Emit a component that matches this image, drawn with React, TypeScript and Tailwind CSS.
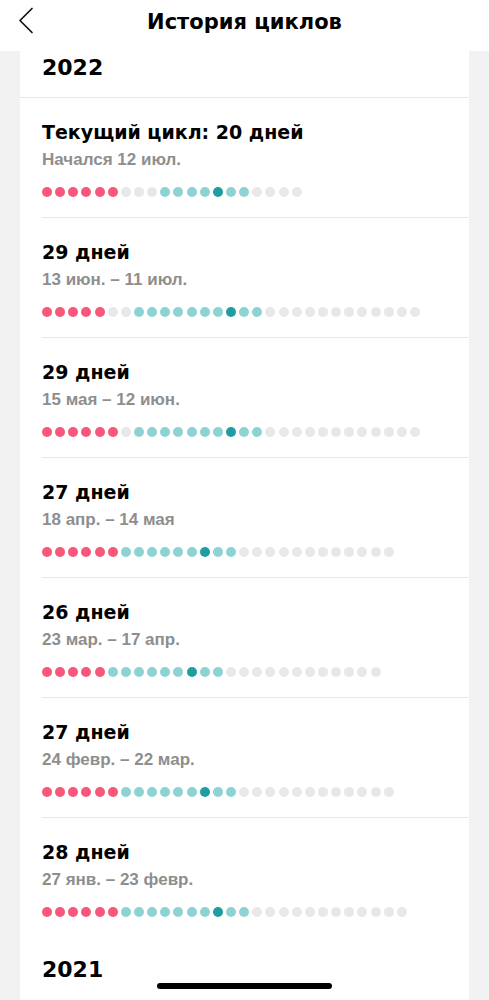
type Dot = "p" | "g" | "t" | "d";

const colors: Record<Dot, string> = {
  p: "bg-[#f8577b]",
  g: "bg-[#e8e8e8]",
  t: "bg-[#8ed3d3]",
  d: "bg-[#1f9da2]",
};

function build(parts: [Dot, number][]): Dot[] {
  return parts.flatMap(([c, n]) => Array.from({ length: n }, () => c));
}

const cycles = [
  {
    title: "Текущий цикл: 20 дней",
    range: "Начался 12 июл.",
    dots: build([["p", 6], ["g", 3], ["t", 4], ["d", 1], ["t", 2], ["g", 4]]),
  },
  {
    title: "29 дней",
    range: "13 июн. – 11 июл.",
    dots: build([["p", 5], ["g", 2], ["t", 7], ["d", 1], ["t", 2], ["g", 12]]),
  },
  {
    title: "29 дней",
    range: "15 мая – 12 июн.",
    dots: build([["p", 6], ["g", 1], ["t", 7], ["d", 1], ["t", 2], ["g", 12]]),
  },
  {
    title: "27 дней",
    range: "18 апр. – 14 мая",
    dots: build([["p", 6], ["t", 6], ["d", 1], ["t", 2], ["g", 12]]),
  },
  {
    title: "26 дней",
    range: "23 мар. – 17 апр.",
    dots: build([["p", 5], ["t", 6], ["d", 1], ["t", 2], ["g", 12]]),
  },
  {
    title: "27 дней",
    range: "24 февр. – 22 мар.",
    dots: build([["p", 6], ["t", 6], ["d", 1], ["t", 2], ["g", 12]]),
  },
  {
    title: "28 дней",
    range: "27 янв. – 23 февр.",
    dots: build([["p", 6], ["t", 7], ["d", 1], ["t", 2], ["g", 12]]),
  },
];

const heavy = "font-['DejaVu_Sans',sans-serif] font-bold";
const plain = "font-['Liberation_Sans',sans-serif] font-bold";

function CycleRow({ cycle, last }: { cycle: (typeof cycles)[number]; last: boolean }) {
  return (
    <div className="pl-[22px]">
      <div className={["pt-[22px]", last ? "pb-[21px]" : "border-b border-[#e8e8e8] pb-[20px]"].join(" ")}>
        <h3 className={`${heavy} text-[19px] leading-[24px] text-black`}>{cycle.title}</h3>
        <p className={`${plain} mt-[6px] text-[17px] leading-[20px] text-[#8e8e8e]`}>{cycle.range}</p>
        <div className="mt-[17px] flex gap-[3.15px]">
          {cycle.dots.map((c, i) => (
            <span key={i} className={`h-[10px] w-[10px] rounded-full ${colors[c]}`} />
          ))}
        </div>
      </div>
    </div>
  );
}

export default function App() {
  return (
    <div className="relative h-[1000px] overflow-hidden bg-[#f2f2f2]">
      <header className="grid h-[51px] grid-cols-[52px_1fr_52px] bg-white">
        <button type="button" className="flex items-start pl-[18px] pt-[7px]" aria-label="Назад">
          <svg width="16" height="27" viewBox="0 0 16 27" fill="none">
            <path d="M14 1.5 L2 13.5 L14 25.5" stroke="#111" strokeWidth="1.7" strokeLinecap="round" strokeLinejoin="round" />
          </svg>
        </button>
        <h1 className={`${heavy} pt-[6px] text-center text-[21px] leading-[32px] text-black`}>История циклов</h1>
        <span />
      </header>

      <main className="mx-[20px] bg-white">
        <section>
          <h2 className={`${heavy} border-b border-[#e8e8e8] pl-[22px] pt-[2px] pb-[14px] text-[22px] leading-[30px] text-black`}>
            2022
          </h2>
          {cycles.map((c, i) => (
            <CycleRow key={i} cycle={c} last={i === cycles.length - 1} />
          ))}
        </section>
        <section>
          <h2 className={`${heavy} pl-[22px] pt-[17px] pb-[15px] text-[22px] leading-[30px] text-black`}>2021</h2>
        </section>
      </main>

      <div className="absolute left-[157px] top-[983px] h-[6px] w-[175px] rounded-full bg-black" />
    </div>
  );
}
